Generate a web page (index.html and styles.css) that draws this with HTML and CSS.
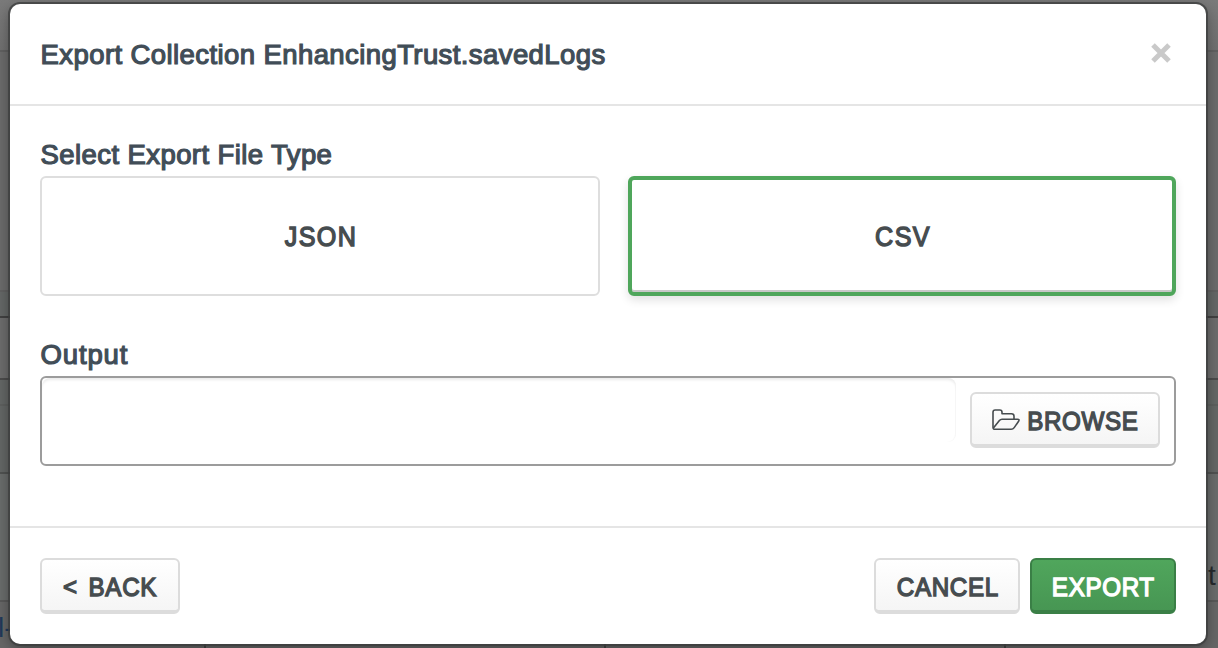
FILE: index.html
```html
<!DOCTYPE html>
<html lang="en">
<head>
<meta charset="utf-8">
<title>Export Collection</title>
<link rel="stylesheet" href="styles.css">
</head>
<body>
<div class="page">
  <div class="row row-nav"></div>
  <div class="row row-header"></div>
  <div class="row row-tabs"></div>
  <div class="row row-filter"></div>
  <div class="row row-toolbar"></div>
  <div class="row row-content"></div>
  <div class="row row-doc"><span>t</span></div>
  <div class="row row-columns"><span class="link">l-</span></div>
</div>
<section class="modal">
  <header class="modal-header">
    <h1 class="title">Export Collection EnhancingTrust.savedLogs</h1>
    <button class="close" aria-label="Close"><svg width="20" height="20" viewBox="0 0 20 20"><path d="M2 2 18 18M18 2 2 18" stroke="#c9c9c9" stroke-width="5"/></svg></button>
  </header>
  <div class="modal-body">
    <div class="label label-type">Select Export File Type</div>
    <div class="types">
      <button class="type"><span class="caps">JSON</span></button>
      <button class="type selected"><span class="caps">CSV</span></button>
    </div>
    <div class="label label-output">Output</div>
    <div class="output">
      <div class="path"></div>
      <button class="btn browse"><svg width="28" height="22" viewBox="0 0 28 22" fill="none" stroke="#464c4f" stroke-width="1.6" stroke-linejoin="round"><path d="M1 18V3.2Q1 1 3.2 1H7.8Q10 1 10 3.2V4.8H19.5Q22 4.8 22 7.2V10.3"/><path d="M1.2 19.2 7.4 11.6Q8.5 10.3 10 10.3H25.5Q27.8 10.3 26.6 12.2L22.2 18.6Q21 20.3 19.2 20.3H3Q.8 20.3 1 18"/></svg><span class="caps">BROWSE</span></button>
    </div>
  </div>
  <footer class="modal-footer">
    <button class="btn back"><span class="less">&lt;</span><span class="caps">BACK</span></button>
    <button class="btn cancel"><span class="caps">CANCEL</span></button>
    <button class="btn export"><span class="caps">EXPORT</span></button>
  </footer>
</section>
</body>
</html>
```
FILE: styles.css
```css
* { box-sizing: border-box; }
body {
  margin: 0; width: 1218px; height: 648px; overflow: hidden; position: relative;
  background: #6b6b6b; font-family: "Liberation Sans", Arial, sans-serif;
}
button { margin: 0; font-family: inherit; padding: 0; }
.page { display: flex; flex-direction: column; height: 648px; }
.row { flex: none; border-bottom: 2px solid #606060; }
.row-nav { height: 52px; background: linear-gradient(#7a7a7a, #707070); }
.row-header { height: 240px; background: #6b6b6b; }
.row-tabs { height: 26px; background: #646766; border-color: #414141; }
.row-filter { height: 62px; background: #6c6c6c; border-color: #4b4b4b; }
.row-toolbar { height: 26px; background: #636665; border-color: #5d5f5e; }
.row-content { height: 68px; background: #636665; border-color: #505251; }
.row-doc { height: 128px; background: #696c6b; padding-top: 86px; font-size: 28px; line-height: 32px; color: #25292c; border-color: #585858; }
.row-doc span { display: block; margin-left: 1208px; }
.row-columns {
  height: 46px; border: 0; padding-top: 12px; font-size: 28px; line-height: 28px; color: #20395a;
  background: linear-gradient(90deg, transparent 204px, #444 204px 206px, transparent 206px 604px, #444 604px 606px, transparent 606px 1004px, #444 1004px 1006px, transparent 1006px), #666;
}
.link { margin-left: -2px; }
.modal {
  position: absolute; left: 10px; top: 4px; width: 1196px; height: 640px;
  display: flex; flex-direction: column; background: #fff; border-radius: 10px;
  box-shadow: 0 0 0 2px rgba(60,61,61,.75), 0 4px 14px rgba(0,0,0,.4);
}
.modal-header {
  height: 102px; flex: none; border-bottom: 2px solid #e5e5e5; padding: 0 35px 2px 30px;
  display: flex; align-items: center; justify-content: space-between;
}
.title, .label {
  margin: 0; font-size: 27.5px; line-height: 32px; font-weight: 400; color: #414d57;
  -webkit-text-stroke: 1.2px #414d57; white-space: nowrap; letter-spacing: .41px; text-indent: .6px;
}
.title { padding-top: 3px; }
.label-output { letter-spacing: .85px; }
.close { display: flex; border: 0; background: none; margin-top: -1px; }
.modal-body { flex: 1; padding: 33px 30px 0; }
.label { margin-bottom: 5px; }
.types { display: grid; grid-template-columns: 560px 548px; gap: 28px; height: 120px; margin-bottom: 43px; }
.type {
  border: 2px solid #dedede; border-radius: 6px; background: #fff; color: #464c4f;
  font-size: 27px; -webkit-text-stroke: 1.4px #464c4f; padding-top: 2px;
}
.type.selected { border: 4px solid #4fa65b; box-shadow: inset 0 -2px #c8c8c8, 0 4px 10px rgba(0,0,0,.12); }
.caps { display: inline-block; transform: scaleX(.93); letter-spacing: .7px; margin-right: -.7px; }
.type .caps { letter-spacing: 1.5px; margin-right: -1.5px; }
.output {
  height: 90px; border: 2px solid #9c9c9c; border-radius: 6px; display: flex;
  align-items: flex-start; justify-content: space-between; padding-right: 14px;
}
.path { width: 914px; height: 64px; border-radius: 8px; box-shadow: inset 0 3px 3px -1px #ebebeb, inset -1px 0 1px #f7f7f7; }
.btn {
  height: 56px; border: 2px solid #dcdcdc; border-bottom-width: 4px; border-radius: 6px;
  background: linear-gradient(#fff, #f5f5f5); color: #464c4f; font-size: 26px; line-height: 32px;
  -webkit-text-stroke: 1.4px currentColor;
  display: flex; align-items: center; justify-content: center; padding-top: 4px;
}
.browse { width: 190px; margin-top: 14px; gap: 3px; }
.browse svg { margin: -2px 0 0 4px; }
.modal-footer { flex: none; height: 118px; border-top: 2px solid #e5e5e5; padding: 30px 30px 0; display: flex; }
.back { width: 140px; margin-right: auto; gap: 9px; }
.less { font-size: 24px; margin-left: 2px; }
.cancel { width: 146px; margin-right: 10px; }
.export { width: 146px; color: #fff; border-color: #3a7f46; background: linear-gradient(#50a65c, #479653); }
```
